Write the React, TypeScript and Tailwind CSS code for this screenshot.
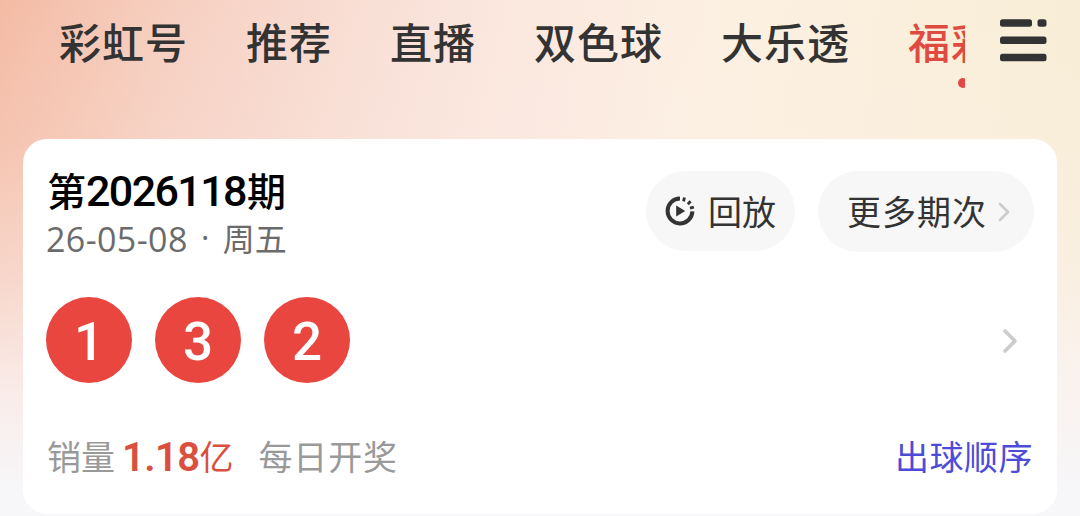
import { ChevronRight } from "lucide-react"

const tabs = ["彩虹号", "推荐", "直播", "双色球", "大乐透"]
const balls = [1, 3, 2]

function MenuIcon() {
  return (
    <svg width="48" height="44" viewBox="0 0 48 44" fill="#333333">
      <rect x="0" y="1.2" width="32" height="7.5" rx="2.5" />
      <rect x="37.5" y="1.2" width="9" height="7.5" rx="2.5" />
      <rect x="0" y="18.4" width="46.5" height="7.5" rx="2.5" />
      <rect x="0" y="35.7" width="46.5" height="7.5" rx="2.5" />
    </svg>
  )
}

function ReplayIcon() {
  return (
    <svg width="30" height="30" viewBox="0 0 30 30" fill="none" stroke="#333333">
      <path d="M15 2.6A12.4 12.4 0 1 0 27.4 15.4" strokeWidth="4" />
      <path d="M18.6 5.4L19.4 1.5M22.8 8.2L25.6 5.2M25 12.2L28.8 11.2" strokeWidth="2.8" />
      <path d="M11.2 9.6L20.2 15L11.2 20.5Z" fill="#333333" stroke="none" />
    </svg>
  )
}

function TabBar() {
  return (
    <nav className="flex h-[139px]">
      <div className="flex w-[965px] shrink-0 gap-[58px] overflow-hidden pl-[59px] pt-[10px] text-[42px] leading-[62px] font-medium tracking-[1px] whitespace-nowrap text-[#333333]">
        {tabs.map((tab) => (
          <span key={tab} className="shrink-0">{tab}</span>
        ))}
        <div className="relative h-[80px] shrink-0 text-[#df4b42]">
          福彩
          <span className="absolute left-[50px] top-[68px] h-[10px] w-[10px] rounded-full bg-[#df4b42]" />
        </div>
      </div>
      <button className="ml-[35px] mt-[18px] h-[44px]">
        <MenuIcon />
      </button>
    </nav>
  )
}

function DrawCard() {
  return (
    <section className="mx-[23px] h-[375px] rounded-[24px] bg-white px-[24px]">
      <div className="flex h-[157px] items-start">
        <div className="flex-1 pt-[24px]">
          <h2 className="flex h-[53px] items-center text-[39px] leading-none font-medium text-black">
            <span>第</span>
            <span className="pt-[3px] font-[Roboto,sans-serif] text-[43px] leading-none tracking-[-1.6px]">2026118</span>
            <span className="ml-[1px]">期</span>
          </h2>
          <p className="flex h-[42px] items-center text-[32px] leading-none text-[#6b6b6b]">
            <span className="-ml-[1px] pt-[3px] font-['Open_Sans',sans-serif] text-[34px] leading-none tracking-[0.4px]">26-05-08</span>
            <span className="w-[35px] text-center font-['Open_Sans',sans-serif]">·</span>
            周五
          </p>
        </div>
        <button className="mt-[32px] flex h-[80px] w-[149px] items-center rounded-full bg-[#f7f7f7] pl-[19px] text-[34px] text-[#333333]">
          <ReplayIcon />
          <span className="ml-[13px] pb-[2px] whitespace-nowrap">回放</span>
        </button>
        <button className="-mr-[1px] ml-[23px] mt-[32px] flex h-[81px] w-[216px] items-center rounded-full bg-[#f7f7f7] pl-[29px] text-[34px] tracking-[1px] text-[#333333]">
          <span className="pb-[2px] whitespace-nowrap">更多期次</span>
          <ChevronRight className="ml-[1px] h-[32px] w-[32px] text-[#cccccc]" strokeWidth={2} />
        </button>
      </div>

      <div className="-ml-[1px] flex h-[87px] items-center gap-[23px]">
        {balls.map((ball) => (
          <span
            key={ball}
            className="flex h-[86px] w-[86px] items-center justify-center rounded-full bg-[#e9463f] pt-[5px] font-[Roboto,sans-serif] text-[53px] leading-none font-medium text-white"
          >
            {ball}
          </span>
        ))}
        <ChevronRight className="ml-auto mr-[3px] mt-[2px] h-[40px] w-[40px] text-[#cccccc]" strokeWidth={2.2} />
      </div>

      <div className="mt-[47px] flex h-[50px] items-center text-[34px] whitespace-nowrap text-[#999999]">
        销量
        <span className="ml-[7px] pt-[6px] font-[Roboto,sans-serif] text-[40px] leading-none font-semibold tracking-[-0.6px] text-[#d9503f]">1.18</span>
        <span className="text-[#d9503f]">亿</span>
        <span className="ml-[25px] tracking-[0.8px]">每日开奖</span>
        <a className="ml-auto tracking-[0.5px] text-[#4c4cd8]">出球顺序</a>
      </div>
    </section>
  )
}

export default function App() {
  return (
    <main className="h-[516px] w-[1080px] overflow-hidden bg-[linear-gradient(95deg,#f4bba4_0%,#f6cfc0_15%,#f9e0d7_34%,#fbe9e0_48%,#fcf0e2_64%,#faefdb_82%,#f8eed6_100%)] font-['Noto_Sans_CJK_SC',sans-serif]">
      <div className="h-[516px] bg-[linear-gradient(180deg,rgba(250,240,235,0)_0%,rgba(251,238,234,0.14)_27%,rgba(251,240,238,0.5)_55%,rgba(250,244,245,0.85)_77%,#f7f6f8_94%)]">
        <TabBar />
        <DrawCard />
      </div>
    </main>
  )
}
